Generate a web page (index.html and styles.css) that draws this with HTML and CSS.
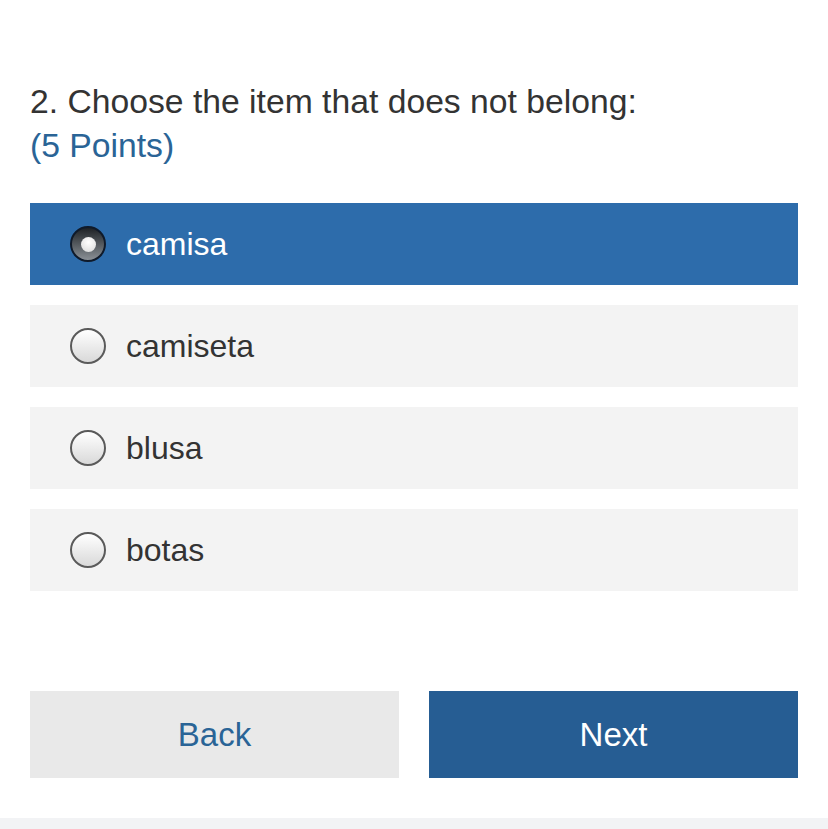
FILE: index.html
```html
<!DOCTYPE html>
<html>
<head>
<meta charset="utf-8">
<link rel="stylesheet" href="styles.css">
</head>
<body>
<div class="page">
  <div class="question">
    <div class="q-title">2. Choose the item that does not belong:</div>
    <div class="q-points">(5 Points)</div>
  </div>
  <div class="options">
    <label class="option selected"><span class="radio"><span class="dot"></span></span><span class="label">camisa</span></label>
    <label class="option"><span class="radio"></span><span class="label">camiseta</span></label>
    <label class="option"><span class="radio"></span><span class="label">blusa</span></label>
    <label class="option"><span class="radio"></span><span class="label">botas</span></label>
  </div>
  <div class="buttons">
    <div class="btn btn-back">Back</div>
    <div class="btn btn-next">Next</div>
  </div>
</div>
<div class="footer-strip"></div>
</body>
</html>
```
FILE: styles.css
```css
html, body {
  margin: 0;
  padding: 0;
  background: #fff;
  font-family: "Liberation Sans", Arial, sans-serif;
  color: #333;
}
.page {
  padding: 79px 30px 0 30px;
  height: 739px;
  box-sizing: border-box;
}
.question {
  font-size: 33.7px;
  line-height: 44px;
}
.q-title { color: #333; }
.q-points { color: #2a6496; }
.options {
  margin-top: 36px;
  display: flex;
  flex-direction: column;
  gap: 20px;
}
.option {
  display: flex;
  align-items: center;
  height: 82px;
  background: #f3f3f3;
  padding-left: 40px;
  box-sizing: border-box;
  font-size: 32px;
  color: #333;
}
.option.selected {
  background: #2d6cab;
  color: #fff;
}
.radio {
  width: 36px;
  height: 36px;
  box-sizing: border-box;
  border-radius: 50%;
  border: 2px solid #5a5a5a;
  background: linear-gradient(#ffffff, #d9d9d9);
  margin-right: 20px;
  display: flex;
  align-items: center;
  justify-content: center;
  flex: none;
}
.option.selected .radio {
  border: 2px solid #0f1a2a;
  background: linear-gradient(#1e2226, #8a9096);
}
.dot {
  width: 15px;
  height: 15px;
  border-radius: 50%;
  background: radial-gradient(circle at 50% 35%, #ffffff, #d8d8d8);
}
.buttons {
  margin-top: 100px;
  display: flex;
  gap: 30px;
}
.btn {
  flex: 1;
  height: 87px;
  display: flex;
  align-items: center;
  justify-content: center;
  font-size: 33px;
}
.btn-back {
  background: #e9e9e9;
  color: #2a6496;
}
.btn-next {
  background: #265d93;
  color: #fff;
}
.footer-strip {
  margin-top: 79px;
  height: 11px;
  background: #f2f3f5;
}
```
